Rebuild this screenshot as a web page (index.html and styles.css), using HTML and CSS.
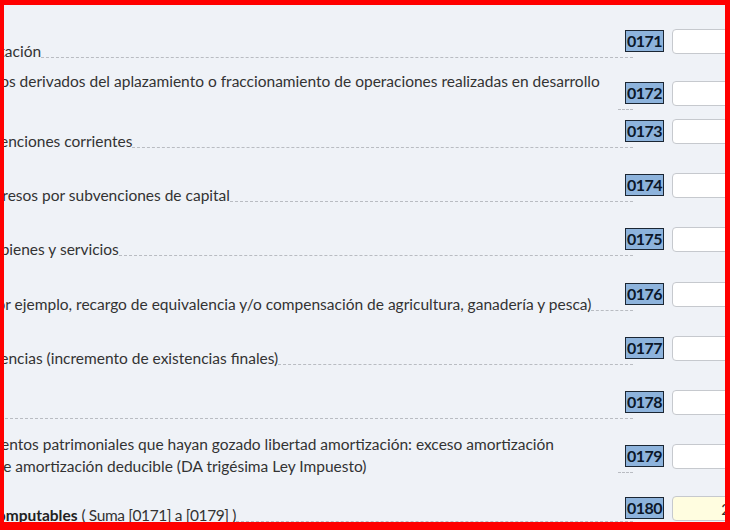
FILE: index.html
```html
<!DOCTYPE html>
<html lang="es">
<head>
<meta charset="utf-8">
<title>Ingresos computables</title>
<link rel="stylesheet" href="styles.css">
</head>
<body>
<div class="frame">
  <div class="viewport">
    <div class="sheet">
      <div class="row">
        <div class="label-wrap"><span class="label">Ingresos de explotación</span><span class="fill"></span></div>
        <span class="code">0171</span>
        <input class="amount" type="text" value="">
      </div>
      <div class="row row--two">
        <div class="label-wrap"><span class="label">Ingresos financieros derivados del aplazamiento o fraccionamiento de operaciones realizadas en desarrollo de la actividad</span><span class="fill"></span></div>
        <span class="code">0172</span>
        <input class="amount" type="text" value="">
      </div>
      <div class="row row--short">
        <div class="label-wrap"><span class="label">Ingresos por subvenciones corrientes</span><span class="fill"></span></div>
        <span class="code">0173</span>
        <input class="amount" type="text" value="">
      </div>
      <div class="row">
        <div class="label-wrap"><span class="label">Imputación de ingresos por subvenciones de capital</span><span class="fill"></span></div>
        <span class="code">0174</span>
        <input class="amount" type="text" value="">
      </div>
      <div class="row">
        <div class="label-wrap"><span class="label">Autoconsumo de bienes y servicios</span><span class="fill"></span></div>
        <span class="code">0175</span>
        <input class="amount" type="text" value="">
      </div>
      <div class="row row--tall">
        <div class="label-wrap"><span class="label">Otros ingresos (por ejemplo, recargo de equivalencia y/o compensación de agricultura, ganadería y pesca)</span><span class="fill"></span></div>
        <span class="code">0176</span>
        <input class="amount" type="text" value="">
      </div>
      <div class="row">
        <div class="label-wrap"><span class="label">Variación de existencias (incremento de existencias finales)</span><span class="fill"></span></div>
        <span class="code">0177</span>
        <input class="amount" type="text" value="">
      </div>
      <div class="row">
        <div class="label-wrap"><span class="label">Otros</span><span class="fill"></span></div>
        <span class="code">0178</span>
        <input class="amount" type="text" value="">
      </div>
      <div class="row">
        <div class="label-wrap"><span class="label">Venta de los elementos patrimoniales que hayan gozado libertad amortización: exceso amortización contabilizada sobre amortización deducible (DA trigésima Ley Impuesto)</span><span class="fill"></span></div>
        <span class="code">0179</span>
        <input class="amount" type="text" value="">
      </div>
      <div class="row row--last">
        <div class="label-wrap"><span class="label"><strong>Total ingresos computables</strong> <span class="sum">( Suma [0171] a [0179] )</span></span><span class="fill"></span></div>
        <span class="code">0180</span>
        <input class="amount amount--total" type="text" value="23.456,78" readonly>
      </div>
    </div>
  </div>
</div>
</body>
</html>
```

FILE: styles.css
```css
* { box-sizing: border-box; }

html, body {
  margin: 0;
  padding: 0;
  width: 730px;
  height: 530px;
  overflow: hidden;
  background: #ff0000;
}

.frame {
  width: 730px;
  height: 530px;
  padding: 5px 5px 8px 4px;
}

.viewport {
  width: 100%;
  height: 100%;
  overflow: hidden;
  background: #eff2f7;
}

.sheet {
  margin-left: -123px;
  width: 1000px;
  padding-top: 3px;
  font-family: "Lato", "Liberation Sans", sans-serif;
  font-size: 15.5px;
  color: #333333;
}

.row {
  display: flex;
  align-items: flex-end;
  min-height: 54px;
}

.row--two { min-height: 52px; }
.row--short { min-height: 38px; }
.row--tall { min-height: 55px; }
.row--last { min-height: 52px; }
.row--last .label-wrap { margin-bottom: 3px; }

.label-wrap {
  flex: 0 0 752px;
  display: flex;
  align-items: flex-end;
}

.label {
  flex: 0 1 auto;
  line-height: 22px;
}

.label strong {
  font-weight: 700;
  color: #222222;
  word-spacing: 5px;
}

.sum { letter-spacing: -0.4px; }

.fill {
  flex: 1 1 auto;
  min-width: 15px;
  border-bottom: 1px dashed #b9bcc2;
  margin-bottom: 4px;
}

.code {
  flex: 0 0 39px;
  height: 22px;
  margin-left: -8px;
  margin-bottom: 10px;
  background: #8db3dc;
  border: 1px solid #1b2633;
  color: #0b1729;
  font-weight: 700;
  font-size: 16px;
  letter-spacing: -0.5px;
  line-height: 20px;
  text-align: center;
}

.amount {
  flex: none;
  width: 126px;
  min-width: 0;
  height: 25px;
  margin: 0 0 8px 8px;
  border: 1px solid #c6c9ce;
  border-radius: 4px;
  background: #ffffff;
  font-family: "Lato", "Liberation Sans", sans-serif;
  font-size: 15px;
  color: #333333;
  text-align: right;
  padding: 0 8px;
}

.amount--total { background: #fffde0; }
```
